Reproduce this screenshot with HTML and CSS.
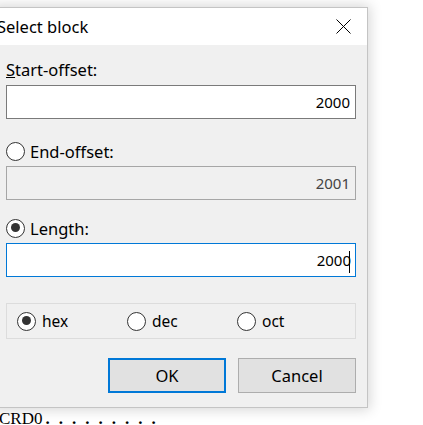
FILE: index.html
```html
<!DOCTYPE html>
<html lang="en">

<head>
    <meta charset="UTF-8">
    <title>Select block</title>
    <link rel="stylesheet" href="styles.css">
</head>

<body>
    <div class="dialog">
        <div class="titlebar">
            <span class="title">Select block</span>
            <svg class="close" width="15" height="15" viewBox="0 0 15 15">
                <path d="M0.5 0.5 L14.5 14.5 M14.5 0.5 L0.5 14.5" stroke="#000" stroke-width="1" fill="none" />
            </svg>
        </div>

        <div class="content">
            <div class="label"><u>S</u>tart-offset:</div>
            <div class="field">2000</div>

            <div class="option-row end-row">
                <span class="radio"></span>
                <span>End-offset:</span>
            </div>
            <div class="field disabled">2001</div>

            <div class="option-row length-row">
                <span class="radio checked"></span>
                <span>Length:</span>
            </div>
            <div class="field focused">2000<span class="caret"></span></div>

            <div class="base-group">
                <div class="base-item"><span class="radio checked"></span><span>hex</span></div>
                <div class="base-item"><span class="radio"></span><span>dec</span></div>
                <div class="base-item"><span class="radio"></span><span>oct</span></div>
            </div>

            <div class="buttons">
                <button class="btn default">OK</button>
                <button class="btn">Cancel</button>
            </div>
        </div>
    </div>

    <div class="hexline">CRD0<span class="dots">.........</span></div>
</body>

</html>
```

FILE: styles.css
```css
body {
    margin: 0;
    padding-top: 7px;
    background-color: #fff;
    font-family: 'Noto Sans', 'Segoe UI', sans-serif;
    font-size: 16.5px;
    color: #000;
    overflow: hidden;
    height: 425px;
    box-sizing: border-box;
}

.dialog {
    width: 374px;
    margin-left: -6px;
    box-sizing: border-box;
    border: 1px solid #c4c4c4;
    background-color: #f0f0f0;
    box-shadow: 0 0 12px 2px rgba(0, 0, 0, 0.16);
}

.titlebar {
    display: flex;
    align-items: center;
    justify-content: space-between;
    height: 37px;
    padding: 0 16px 0 2px;
    background-color: #fff;
}

.title {
    font-size: 16.5px;
    line-height: 20px;
}

.close {
    display: block;
}

.content {
    padding: 15px 11px 14px;
}

.label {
    height: 20px;
    line-height: 20px;
    margin-bottom: 5px;
}

.field {
    height: 34px;
    line-height: 32px;
    box-sizing: border-box;
    border: 1px solid #7a7a7a;
    background-color: #fff;
    text-align: right;
    padding-right: 5px;
    font-size: 15px;
}

.field.disabled {
    border-color: #a6a6a6;
    background-color: #f0f0f0;
    color: #444;
}

.field.focused {
    border-color: #0078d7;
}

.caret {
    display: inline-block;
    width: 1px;
    height: 22px;
    margin-left: -2px;
    vertical-align: middle;
    background-color: #000;
}

.option-row {
    display: flex;
    align-items: center;
    gap: 5px;
    height: 20px;
    margin-bottom: 5px;
}

.end-row {
    margin-top: 22px;
}

.length-row {
    margin-top: 18px;
}

.radio {
    position: relative;
    width: 19px;
    height: 19px;
    box-sizing: border-box;
    border: 1.5px solid #333;
    border-radius: 50%;
    background-color: #fff;
    flex-shrink: 0;
}

.radio.checked::after {
    content: "";
    position: absolute;
    left: 3.5px;
    top: 3.5px;
    width: 9px;
    height: 9px;
    border-radius: 50%;
    background-color: #333;
}

.base-group {
    display: flex;
    align-items: center;
    height: 36px;
    margin-top: 26px;
    padding-left: 10px;
    box-sizing: border-box;
    border: 1px solid #dcdcdc;
    font-size: 15.5px;
}

.base-item {
    display: flex;
    align-items: center;
    gap: 6px;
    width: 110px;
}

.buttons {
    display: flex;
    justify-content: flex-end;
    gap: 12px;
    margin-top: 19px;
}

.btn {
    width: 118px;
    height: 35px;
    padding: 0;
    box-sizing: border-box;
    border: 1px solid #adadad;
    background-color: #e1e1e1;
    font-family: inherit;
    font-size: 16.5px;
    color: #000;
}

.btn.default {
    border: 2px solid #0078d7;
}

.hexline {
    margin: 2px 0 0 -1px;
    font-family: 'Liberation Serif', serif;
    font-size: 17px;
    line-height: 18px;
    white-space: nowrap;
}

.dots {
    margin-left: 3px;
    letter-spacing: 9px;
    font-weight: bold;
}
```
